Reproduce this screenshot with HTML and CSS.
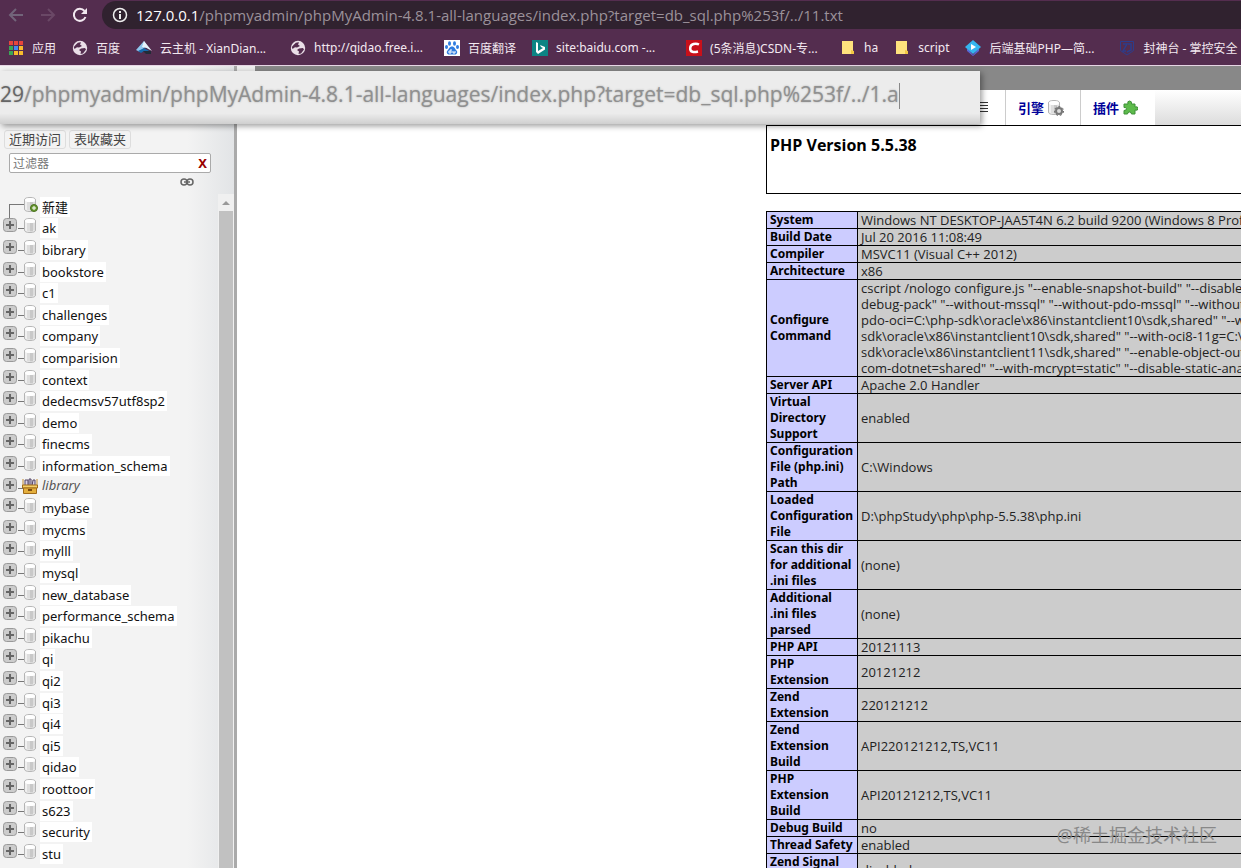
FILE: index.html
```html
<!DOCTYPE html>
<html lang="zh-CN">
  <head>
    <meta charset="UTF-8" />
    <meta name="viewport" content="width=device-width, initial-scale=1.0" />
    <title>phpMyAdmin</title>
    <link rel="stylesheet" href="styles.css">
  </head>
  <body>
    <!-- Shared icons -->
    <svg class="defs" width="0" height="0">
      <symbol id="globe" viewBox="0 0 16 16">
        <circle cx="8" cy="8" r="7.2" fill="#eadfe8" />
        <path d="M4 4.5Q6 2 9 2.4L8 4.5 10 6 7 7.5 5 7.2 2.5 9 1.8 7zM9 8.5l4-.5 1 1.5-3 4-2.5.5.5-2.5-2-1.5z" fill="#542d4f" />
      </symbol>
      <symbol id="folder" viewBox="0 0 16 16">
        <path d="M2 1h11v10l1 3H2z" fill="#ffe27d" />
        <path d="M11 10l3 1v3h-3z" fill="#f2c744" />
      </symbol>
      <symbol id="plus" viewBox="0 0 14 14">
        <rect x=".5" y=".5" width="13" height="13" rx="3" fill="#ccc" stroke="#999" />
        <path d="M7 3v8M3 7h8" stroke="#666" stroke-width="2" />
      </symbol>
      <symbol id="db" viewBox="0 0 12 15">
        <path d="M.5 3Q.5.5 6 .5T11.500 3v9q0 2.500-5.500 2.500T.5 12z" fill="#f0f0f0" stroke="#b4b4b4" />
        <path d="M3 5h3v8.500H3zM9 5h2v7.500H9z" fill="#ddd" />
        <path d="M6 5h3v8.500H6z" fill="#c8c8c8" />
        <ellipse cx="6" cy="3" rx="5" ry="2" fill="#fff" />
      </symbol>
      <symbol id="group" viewBox="0 0 16 16">
        <path d="M3 8V2h3v6M7 8V1h2v7M10 8l1-6h2v6" fill="#d8d0e8" stroke="#504060" />
        <path d="M1 1v6M15 1v6" stroke="#c08a30" />
        <path d="M.5 7h15v3h-15z" fill="#f4cf68" stroke="#a06a18" />
        <path d="M1.500 10h13v5.500h-13z" fill="#e3ae3c" stroke="#a06a18" />
        <path d="M6 12h4" stroke="#7a4a10" stroke-width="2" />
      </symbol>
    </svg>

    <header class="browser">
      <div class="toolbar">
        <button class="nav-btn" aria-label="Back">
          <svg width="16" height="16" viewBox="0 0 16 16" fill="none" stroke="#72647a" stroke-width="2"><path d="M15 8H2M8 2L2 8l6 6" /></svg>
        </button>
        <button class="nav-btn" aria-label="Forward">
          <svg width="16" height="16" viewBox="0 0 16 16" fill="none" stroke="#6a4866" stroke-width="2"><path d="M1 8h13M8 2l6 6-6 6" /></svg>
        </button>
        <button class="nav-btn" aria-label="Reload">
          <svg width="16" height="16" viewBox="0 0 16 16"><path d="M13.500 10A6 6 0 1 1 12.500 4" fill="none" stroke="#f2e8f0" stroke-width="2" /><path d="M15 1v6H9z" fill="#f2e8f0" /></svg>
        </button>
        <div class="address">
          <svg width="16" height="16" viewBox="0 0 16 16"><circle cx="8" cy="8" r="6.500" fill="none" stroke="#eee" stroke-width="1.500" /><path d="M8 7v5M8 4v2" stroke="#eee" stroke-width="2" /></svg>
          <span><b>127.0.0.1</b>/phpmyadmin/phpMyAdmin-4.8.1-all-languages/index.php?target=db_sql.php%253f/../11.txt</span>
        </div>
      </div>
      <nav class="bookmarks">
        <a href="#">
          <svg viewBox="0 0 16 16"><path d="M1 1h4v4H1zM6 1h4v4H6zM11 1h4v4h-4z" fill="#e8453c" /><path d="M1 6h4v4H1zM1 11h4v4H1z" fill="#3aa757" /><path d="M6 6h4v4H6z" fill="#4688f1" /><path d="M11 6h4v4h-4zM6 11h4v4H6zM11 11h4v4h-4z" fill="#f9bb2d" /></svg>
          <span>应用</span>
        </a>
        <a href="#"><svg><use href="#globe" /></svg><span>百度</span></a>
        <a href="#" class="long">
          <svg viewBox="0 0 16 16"><path d="M8 1L0 10l4 2 5-5 5 3z" fill="#8fc6ee" /><path d="M8 1l-2 6 5 1 5 3z" fill="#e8f3fb" /><path d="M2 11l6-3 7 4-2 2-5-3-3 2z" fill="#176aac" /><path d="M7 11h8v3h-5z" fill="#222c38" /></svg>
          <span>云主机 - XianDian...</span>
        </a>
        <a href="#" class="long"><svg><use href="#globe" /></svg><span>http://qidao.free.i...</span></a>
        <a href="#">
          <svg viewBox="0 0 16 16"><rect width="16" height="16" fill="#fff" /><g fill="#2f7de0"><ellipse cx="5.500" cy="3.500" rx="1.500" ry="2.200" /><ellipse cx="10.500" cy="3.500" rx="1.500" ry="2.200" /><ellipse cx="2.500" cy="7" rx="1.500" ry="2" /><ellipse cx="13.500" cy="7" rx="1.500" ry="2" /><path d="M8 6.500c2.500 0 3 2.500 4.500 4s.5 4-1.500 4H5c-2 0-3-2.500-1.500-4s2-4 4.500-4z" /></g><path d="M7 9v4H5v-2h2M9 11v2h2v-2" fill="none" stroke="#fff" /></svg>
          <span>百度翻译</span>
        </a>
        <a href="#" class="long">
          <svg viewBox="0 0 16 16"><rect width="16" height="16" fill="#0c8484" /><path d="M4 2l2 1v8l5-3-2-1-1-2 5 2v2.500L6 14l-2-2z" fill="#fff" /></svg>
          <span>site:baidu.com -...</span>
        </a>
        <a href="#" class="long">
          <svg viewBox="0 0 16 16"><rect width="16" height="16" fill="#c9101a" /><path d="M13 4.500C10 3 4.500 3.500 4.200 8S8 12.500 12 11.500" fill="none" stroke="#fff" stroke-width="2.500" /></svg>
          <span>(5条消息)CSDN-专...</span>
        </a>
        <a href="#"><svg><use href="#folder" /></svg><span>ha</span></a>
        <a href="#"><svg><use href="#folder" /></svg><span>script</span></a>
        <a href="#" class="long">
          <svg viewBox="0 0 16 16"><path d="M2 8l6 7 6-7v3l-6 5-6-5z" fill="#5966d8" /><path d="M8 0l8 7-8 7-8-7z" fill="#35b5ef" /><path d="M6 4l5 3-5 3z" fill="#fff" /></svg>
          <span>后端基础PHP—简...</span>
        </a>
        <a href="#" class="long">
          <svg viewBox="0 0 16 16" fill="none" stroke="#2c3d8c"><path d="M1.500 1.500h13v9L8 15l-6.500-4.500z" /><path d="M4 4h4l-4 7h3M9 4h3v6l-4 2" stroke-width="1.500" /></svg>
          <span>封神台 - 掌控安全</span>
        </a>
      </nav>
    </header>

    <div class="address-zoom"><b>29</b>/phpmyadmin/phpMyAdmin-4.8.1-all-languages/index.php?target=db_sql.php%253f/../1.a<i></i></div>

    <div class="page">
      <aside class="sidebar">
        <div class="quick">
          <button>近期访问</button>
          <button>表收藏夹</button>
        </div>
        <div class="filter">
          <input type="text" placeholder="过滤器" aria-label="过滤器" />
          <button>X</button>
        </div>
        <svg class="link-icon" width="14" height="8" viewBox="0 0 14 8" fill="none" stroke="#666" stroke-width="1.500"><rect x="1" y="1" width="6" height="6" rx="3" /><rect x="7" y="1" width="6" height="6" rx="3" /><path d="M4 4h6" /></svg>
        <div class="tree-wrap">
          <ul class="tree" id="tree">
            <li class="new">
              <span class="branch"></span>
              <svg class="db" width="14" height="15" viewBox="0 0 14 15"><use href="#db" width="12" height="15" /><circle cx="10" cy="11" r="3.500" fill="#6a9a32" stroke="#47701c" /><path d="M10 9v4M8 11h4" stroke="#fff" /></svg>
              <a href="#">新建</a>
            </li>
          </ul>
          <div class="scrollbar"><span class="arrow"></span><span class="thumb"></span></div>
        </div>
      </aside>

      <main class="content">
        <div class="crumbs"><span></span></div>
        <nav class="tabs">
          <a href="#" class="charset">
            <svg width="11" height="12" viewBox="0 0 11 12" stroke="#333"><path d="M0 .5h11M0 3.500h11M0 6.500h11M0 9.500h11" /></svg>
          </a>
          <a href="#">引擎
            <svg width="16" height="16" viewBox="0 0 16 16"><use href="#db" width="12" height="15" /><circle cx="11" cy="11" r="3" fill="#ddd" stroke="#777" stroke-width="2" /><circle cx="11" cy="11" r="4.500" fill="none" stroke="#666" stroke-dasharray="2 2" /></svg>
          </a>
          <a href="#">插件
            <svg width="15" height="15" viewBox="0 0 15 15"><path d="M1 4h4Q4 1 6.500 1T8.500 4H12v3q3-1 3 1.500T12 10v4H8.500q0-2-2-2t-2 2H1v-3.500q2.500 0 2.500-1.700T1 7.500z" fill="#5dbb4b" stroke="#3f9038" /></svg>
          </a>
        </nav>
        <div class="phpinfo">
          <div class="version"><h1>PHP Version 5.5.38</h1></div>
          <table>
            <tr><th>System</th><td>Windows NT DESKTOP-JAA5T4N 6.2 build 9200 (Windows 8 Professional Edition) i586</td></tr>
            <tr><th>Build Date</th><td>Jul 20 2016 11:08:49</td></tr>
            <tr><th>Compiler</th><td>MSVC11 (Visual C++ 2012)</td></tr>
            <tr><th>Architecture</th><td>x86</td></tr>
            <tr><th>Configure<br>Command</th><td>cscript /nologo configure.js "--enable-snapshot-build" "--disable-isapi" "--enable-<br>debug-pack" "--without-mssql" "--without-pdo-mssql" "--without-pi3web" "--with-<br>pdo-oci=C:\php-sdk\oracle\x86\instantclient10\sdk,shared" "--with-oci8=C:\php-<br>sdk\oracle\x86\instantclient10\sdk,shared" "--with-oci8-11g=C:\php-<br>sdk\oracle\x86\instantclient11\sdk,shared" "--enable-object-out-dir=../obj/" "--enable-<br>com-dotnet=shared" "--with-mcrypt=static" "--disable-static-analyze" "--with-pgo"</td></tr>
            <tr><th>Server API</th><td>Apache 2.0 Handler</td></tr>
            <tr><th>Virtual<br>Directory<br>Support</th><td>enabled</td></tr>
            <tr><th>Configuration<br>File (php.ini)<br>Path</th><td>C:\Windows</td></tr>
            <tr><th>Loaded<br>Configuration<br>File</th><td>D:\phpStudy\php\php-5.5.38\php.ini</td></tr>
            <tr><th>Scan this dir<br>for additional<br>.ini files</th><td>(none)</td></tr>
            <tr><th>Additional<br>.ini files<br>parsed</th><td>(none)</td></tr>
            <tr><th>PHP API</th><td>20121113</td></tr>
            <tr><th>PHP<br>Extension</th><td>20121212</td></tr>
            <tr><th>Zend<br>Extension</th><td>220121212</td></tr>
            <tr><th>Zend<br>Extension<br>Build</th><td>API220121212,TS,VC11</td></tr>
            <tr><th>PHP<br>Extension<br>Build</th><td>API20121212,TS,VC11</td></tr>
            <tr><th>Debug Build</th><td>no</td></tr>
            <tr><th>Thread Safety</th><td>enabled</td></tr>
            <tr><th>Zend Signal<br>Handling</th><td>disabled</td></tr>
          </table>
        </div>
      </main>
    </div>
    <div class="watermark">@稀土掘金技术社区</div>

    <script>
      const databases = [
        "ak", "bibrary", "bookstore", "c1", "challenges", "company",
        "comparision", "context", "dedecmsv57utf8sp2", "demo", "finecms",
        "information_schema", "library", "mybase", "mycms", "mylll", "mysql",
        "new_database", "performance_schema", "pikachu", "qi", "qi2", "qi3",
        "qi4", "qi5", "qidao", "roottoor", "s623", "security", "stu",
      ];
      const tree = document.getElementById("tree");

      databases.forEach((name) => {
        const isGroup = name === "library";
        const item = document.createElement("li");
        if (isGroup) item.className = "group";
        item.innerHTML = `
          <button aria-label="Expand ${name}"><svg width="14" height="14"><use href="#plus" /></svg></button>
          <span class="dash"></span>
          <svg class="db"><use href="#${isGroup ? "group" : "db"}" /></svg>
          <a href="#">${name}</a>`;
        tree.appendChild(item);
      });
    </script>
  </body>
</html>
```
FILE: styles.css
```css
* {
  box-sizing: border-box;
}

body {
  margin: 0;
  height: 100vh;
  overflow: hidden;
  position: relative;
  display: flex;
  flex-direction: column;
  font-family: "Noto Sans", "Noto Sans CJK SC", sans-serif;
  background-color: #fff;
  color: #000;
}

a {
  text-decoration: none;
}

button {
  font-family: inherit;
  padding: 0;
  border: none;
  background: none;
  cursor: pointer;
}

svg {
  flex: none;
}

.defs {
  position: absolute;
}

/* Browser bar */
.browser {
  flex: none;
  background-color: #542d4f;
  border-bottom: 1px solid #e6d5e4;
}

.toolbar {
  display: flex;
  align-items: center;
  gap: 16px;
  height: 30px;
  padding-left: 8px;
}

.nav-btn {
  display: flex;
}

.address {
  flex: 1;
  display: flex;
  align-items: center;
  gap: 8px;
  height: 28px;
  margin-left: -2px;
  padding: 0 0 1px 10px;
  border-radius: 14px 0 0 14px;
  background-color: #30222f;
  color: #9b919a;
  font-family: "Open Sans", sans-serif;
  font-size: 15px;
  line-height: 26px;
  white-space: nowrap;
}

.address b {
  font-weight: normal;
  color: #fff;
}

.bookmarks {
  display: flex;
  align-items: center;
  gap: 16px;
  height: 35px;
  padding-left: 8px;
  overflow: hidden;
}

.bookmarks a {
  flex: none;
  display: flex;
  align-items: center;
  gap: 8px;
  color: #f3e9f1;
  font-size: 12px;
  white-space: nowrap;
}

.bookmarks svg {
  width: 16px;
  height: 16px;
}

.bookmarks .long {
  width: 138px;
}

/* Enlarged address strip over the page */
.address-zoom {
  position: absolute;
  top: 71px;
  left: 0;
  width: 980px;
  height: 53px;
  background: linear-gradient(#ececec 80%, #cfcfcf);
  box-shadow: 2px 2px 6px rgba(0, 0, 0, 0.4);
  color: #909090;
  font-family: "Open Sans", sans-serif;
  font-size: 21px;
  line-height: 46px;
  white-space: nowrap;
  text-shadow: 0 0 2px #aaa;
}

.address-zoom b {
  font-weight: normal;
  color: #666;
}

.address-zoom i {
  display: inline-block;
  height: 26px;
  border-left: 1px solid #888;
  vertical-align: middle;
}

.page {
  flex: 1;
  min-height: 0;
  display: flex;
}

/* Sidebar */
.sidebar {
  flex: none;
  width: 237px;
  padding-top: 64px;
  display: flex;
  flex-direction: column;
  border-right: 3px solid #aaa;
  background: linear-gradient(to right, #f3f3f3 80%, #e2e4e6);
}

.quick {
  display: flex;
  gap: 3px;
  padding-left: 4px;
}

.quick button {
  width: 62px;
  height: 19px;
  border: 1px solid #ddd;
  border-radius: 3px;
  color: #444;
  font-size: 13px;
  line-height: 17px;
}

.filter {
  display: flex;
  align-items: center;
  width: 202px;
  height: 20px;
  margin: 4px 0 0 9px;
  padding: 0 3px;
  border: 1px solid #aaa;
  border-radius: 2px;
  background-color: #fff;
}

.filter input {
  flex: 1;
  min-width: 0;
  padding: 0;
  border: none;
  font-family: inherit;
  font-size: 12px;
}

.filter input::placeholder {
  color: #777;
}

.filter button {
  color: #900;
  font-size: 13px;
  font-weight: bold;
}

.link-icon {
  margin: 5px 0 0 180px;
}

.tree-wrap {
  flex: 1;
  min-height: 0;
  display: flex;
  margin-top: 8px;
}

.tree {
  flex: 1;
  margin: 0;
  padding: 3px 0 0 3px;
  overflow: hidden;
  list-style: none;
}

.tree li {
  display: flex;
  align-items: flex-start;
  height: 22px;
}

/* keeps the average row a little under 22px */
.tree li:nth-child(5n + 1),
.tree li:nth-child(5n + 4) {
  height: 21px;
}

/* :nth-child above outranks a plain .group */
.tree li.group:nth-child(n) {
  height: 20px;
}

.tree button {
  display: flex;
}

.tree .dash {
  width: 6px;
  margin: 10px 0 0 1px;
  border-top: 1px solid #777;
}

.tree .branch {
  width: 15px;
  height: 14px;
  margin: 7px 0 0 6px;
  border-top: 1px solid #777;
  border-left: 1px solid #777;
}

.tree .db {
  width: 12px;
  height: 15px;
}

.tree .new .db {
  width: 14px;
}

.tree a {
  height: 20px;
  margin-left: 4px;
  padding: 0 2px;
  background-color: #fff;
  color: #111;
  font-size: 13px;
  line-height: 20px;
}

.tree .new a {
  margin-left: 2px;
}

.tree .group .db {
  width: 16px;
  height: 16px;
  margin-left: -2px;
}

.tree .group a {
  margin-left: 2px;
  background: none;
  color: #555;
  font-style: italic;
  line-height: 14px;
}

.scrollbar {
  width: 16px;
  display: flex;
  flex-direction: column;
  align-items: center;
  background-color: #f0f0f0;
}

.scrollbar .arrow {
  margin: 7px 0 6px;
  border: 4px solid transparent;
  border-top: none;
  border-bottom-color: #999;
}

.scrollbar .thumb {
  flex: 1;
  width: 14px;
  background-color: #c1c1c1;
}

/* Main frame */
.content {
  flex: 1;
  min-width: 0;
  overflow: hidden;
}

.crumbs {
  height: 24px;
  background-color: #888;
}

.crumbs span {
  display: block;
  width: 18px;
  height: 20px;
  background-color: #eee;
}

.tabs {
  display: flex;
  height: 35px;
  background: linear-gradient(#fff, #dcdcdc);
}

.tabs a {
  display: flex;
  align-items: center;
  gap: 4px;
  width: 75px;
  padding-left: 12px;
  border-right: 1px solid #ccc;
  background-color: #fff;
  color: #009;
  font-size: 13px;
  font-weight: bold;
}

.tabs .charset {
  width: 769px;
  padding: 0 17px 0 0;
  justify-content: flex-end;
}

.tabs a:last-child {
  width: 74px;
  border-right: none;
}

/* phpinfo() output */
.phpinfo {
  width: 600px;
  margin-left: 529px;
}

.version {
  height: 69px;
  margin-bottom: 17px;
  padding: 10px 3px;
  border: 1px solid #000;
}

.version h1 {
  margin: 0;
  font-family: "Open Sans", sans-serif;
  font-size: 16px;
  line-height: 18px;
}

.phpinfo table {
  width: 600px;
  table-layout: fixed;
  border-collapse: collapse;
  line-height: 16px;
  white-space: nowrap;
}

.phpinfo th,
.phpinfo td {
  padding: 0 3px;
  border: 1px solid #000;
  overflow: hidden;
  text-align: left;
}

.phpinfo th {
  width: 91px;
  background-color: #ccf;
  font-size: 12px;
}

.phpinfo td {
  background-color: #ccc;
  color: #222;
  font-family: "Open Sans", sans-serif;
  font-size: 13px;
}

.watermark {
  position: absolute;
  right: 24px;
  bottom: 20px;
  color: #888;
  font-size: 18px;
  line-height: 26px;
}
```
